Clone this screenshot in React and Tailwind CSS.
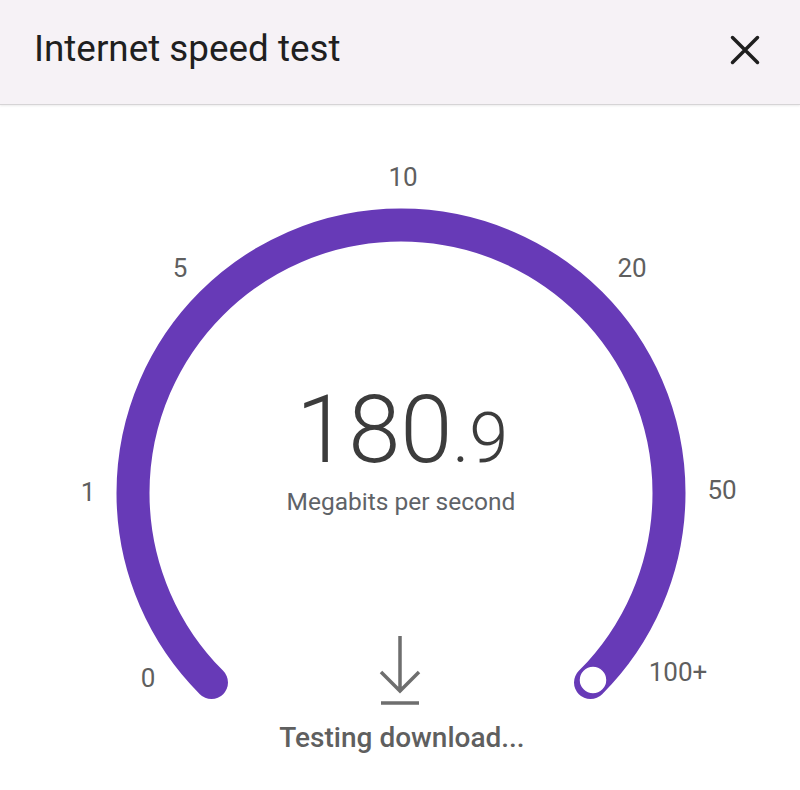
import React from "react";

export default function App() {
  const labels = [
    { t: "10", x: 403, y: 72 },
    { t: "5", x: 180, y: 163 },
    { t: "20", x: 632, y: 163 },
    { t: "1", x: 88, y: 387 },
    { t: "50", x: 722, y: 385 },
    { t: "0", x: 148, y: 573 },
    { t: "100+", x: 678, y: 567 },
  ];
  return (
    <div className="w-[800px] h-[790px] bg-white overflow-hidden" style={{ fontFamily: "Roboto, 'Liberation Sans', sans-serif" }}>
      <header className="h-[105px] bg-[#f6f2f6] border-b border-[#d6d4d6] flex items-center justify-between pl-[34px] pr-[40px] shadow-[0_1px_2px_rgba(0,0,0,0.08)]">
        <h1 className="text-[36.8px] leading-none text-[#1f1f1f] font-normal mt-[-5px]">Internet speed test</h1>
        <svg width="30" height="30" viewBox="0 0 30 30" className="mt-[-4px]">
          <path d="M2.5 2.5 L27.5 27.5 M27.5 2.5 L2.5 27.5" stroke="#1f1f1f" strokeWidth="3.5" strokeLinecap="round" />
        </svg>
      </header>
      <main className="relative h-[685px]">
        <svg className="absolute inset-0" width="800" height="685" viewBox="0 0 800 685">
          <path
            d="M 211.5 577.5 A 268 268 0 1 1 590.5 577.5"
            fill="none"
            stroke="#673ab7"
            strokeWidth="33"
            strokeLinecap="round"
          />
          <circle cx="593" cy="575" r="14" fill="#ffffff" stroke="#673ab7" strokeWidth="1.5" />
        </svg>
        {labels.map((l) => (
          <span
            key={l.t}
            className="absolute -translate-x-1/2 -translate-y-1/2 text-[26px] leading-none text-[#5f5f5f]"
            style={{ left: l.x, top: l.y }}
          >
            {l.t}
          </span>
        ))}
        <div className="relative flex flex-col items-center pt-[278px]">
          <div className="flex items-baseline leading-none text-[#3c3c3c] font-light pl-[4px]">
            <span className="text-[94px] leading-none">180</span>
            <span className="text-[70px] leading-none">.9</span>
          </div>
          <div className="mt-[13px] text-[24.5px] leading-none text-[#5f6368] pl-[2px]">Megabits per second</div>
          <svg width="60" height="72" viewBox="0 0 60 72" className="mt-[119px]">
            <path d="M30 2 V58 M11 38 L30 57 L49 38 M11 69 H49" fill="none" stroke="#6e6e6e" strokeWidth="3.5" />
          </svg>
          <div className="mt-[18px] text-[28px] leading-none font-medium text-[#5f5f5f] pl-[4px]">Testing download...</div>
        </div>
      </main>
    </div>
  );
}
